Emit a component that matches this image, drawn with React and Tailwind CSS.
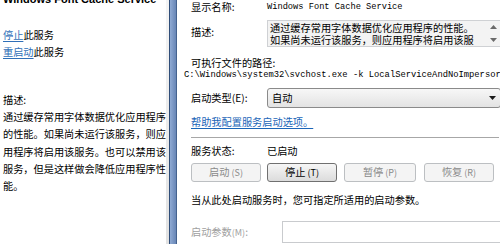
import React from 'react';

const cjk = { fontFamily: '"Noto Sans CJK SC", "Liberation Sans", sans-serif' };
const mono = { fontFamily: '"Liberation Mono", "Noto Sans CJK SC", monospace' };

function Button({ label, hot, disabled, className = '' }) {
  return (
    <div
      className={`w-[70px] h-[19px] flex items-center justify-center rounded-[3px] border text-[10.2px] leading-none ${
        disabled
          ? 'border-[#bcbfc2] bg-[#f4f4f4] text-[#8a8a8a]'
          : 'border-[#707070] bg-gradient-to-b from-[#f6f6f6] to-[#dcdcdc] text-black'
      } ${className}`}
    >
      <span>{label}</span>
      <span className="ml-[2px] text-[9px]">({hot})</span>
    </div>
  );
}

export default function App() {
  const descLines = [
    '通过缓存常用字体数据优化应用程序',
    '的性能。如果尚未运行该服务，则应',
    '用程序将启用该服务。也可以禁用该',
    '服务，但是这样做会降低应用程序性',
    '能。',
  ];

  return (
    <div className="w-[500px] h-[244px] flex overflow-hidden bg-white text-black" style={cjk}>
      {/* left details pane */}
      <div className="w-[166px] shrink-0 overflow-hidden pl-[3px] text-[10.2px]">
        <div
          className="-mt-[6px] h-[12px] text-[11px] leading-[11px] font-bold whitespace-nowrap"
          style={{ fontFamily: '"Liberation Sans", sans-serif' }}
        >
          Windows Font Cache Service
        </div>
        <div className="mt-[20px] h-[17px] leading-[17px] whitespace-nowrap">
          <span className="text-[#2f6fb8] underline underline-offset-2">停止</span>此服务
        </div>
        <div className="h-[17px] leading-[17px] whitespace-nowrap">
          <span className="text-[#2f6fb8] underline underline-offset-2">重启动</span>此服务
        </div>
        <div className="mt-[31px] h-[17px] leading-[17px]">描述:</div>
        {descLines.map((l) => (
          <div key={l} className="h-[17.3px] leading-[17px] whitespace-nowrap">
            {l}
          </div>
        ))}
      </div>

      {/* scrollbar + window frame */}
      <div className="w-[3px] shrink-0 bg-gradient-to-b from-[#f4f4f4] to-[#e2e2e2]" />
      <div className="w-[1px] shrink-0 bg-[#2f4d78]" />
      <div className="w-[6px] shrink-0 bg-gradient-to-r from-[#8faad3] to-[#6886b6]" />
      <div className="w-[1px] shrink-0 bg-[#44628e]" />

      {/* properties dialog */}
      <div className="flex-1 flex flex-col pl-[14px] pr-[5px] text-[10.2px] leading-none">
        <div className="h-[14px] flex items-center">
          <span className="w-[76px]">显示名称:</span>
          <span className="text-[8.7px] whitespace-nowrap" style={mono}>Windows Font Cache Service</span>
        </div>

        <div className="mt-[6px] h-[27px] flex">
          <span className="w-[76px] pt-[7px]">描述:</span>
          <div className="flex-1 flex border border-[#cfd1d4] bg-[#f3f3f3]">
            <div className="flex-1 pl-[2px] pt-[1px] text-[10.2px] leading-[12px] overflow-hidden whitespace-nowrap">
              <div className="h-[12px]">通过缓存常用字体数据优化应用程序的性能。</div>
              <div className="h-[12px]">如果尚未运行该服务，则应用程序将启用该服</div>
            </div>
            <div className="w-[12px] flex flex-col items-center justify-between py-[4px]">
              <svg width="7" height="4" viewBox="0 0 7 4">
                <path d="M0 4 L3.5 0 L7 4 Z" fill="#6a6a6a" />
              </svg>
              <svg width="7" height="4" viewBox="0 0 7 4">
                <path d="M0 0 L3.5 4 L7 0 Z" fill="#6a6a6a" />
              </svg>
            </div>
          </div>
        </div>

        <div className="mt-[9px] h-[14px] flex items-center">可执行文件的路径:</div>
        <div className="-ml-[7px] h-[11px] flex items-center text-[8.8px] whitespace-nowrap overflow-hidden" style={mono}>
          C:\Windows\system32\svchost.exe -k LocalServiceAndNoImpersor
        </div>

        <div className="mt-[7px] h-[20px] flex items-center">
          <span className="w-[76px]">启动类型(E):</span>
          <div className="flex-1 h-full flex items-center rounded-[3px] border border-[#8a8a8a] bg-gradient-to-b from-[#f7f7f7] to-[#e3e3e3] pl-[4px] pr-[4px]">
            <span className="flex-1">自动</span>
            <svg width="7" height="4" viewBox="0 0 7 4">
              <path d="M0 0 L3.5 4 L7 0 Z" fill="#1a1a1a" />
            </svg>
          </div>
        </div>

        <div className="mt-[7px] h-[14px] flex items-center">
          <span className="text-[#1a65b8] underline underline-offset-2">帮助我配置服务启动选项。</span>
        </div>

        <div className="mt-[8px] mr-[2px] h-[2px] border-t border-[#a7a7a7] border-b border-b-white" />

        <div className="mt-[5px] h-[14px] flex items-center">
          <span className="w-[76px]">服务状态:</span>
          <span>已启动</span>
        </div>

        <div className="mt-[5px] flex">
          <Button label="启动" hot="S" disabled />
          <Button label="停止" hot="T" className="ml-[6px]" />
          <Button label="暂停" hot="P" disabled className="ml-[7px] w-[72px]" />
          <Button label="恢复" hot="R" disabled className="ml-[8px]" />
        </div>

        <div className="mt-[11px] h-[14px] flex items-center whitespace-nowrap">
          当从此处启动服务时，您可指定所适用的启动参数。
        </div>

        <div className="mt-[14px] h-[22px] flex items-center">
          <span className="w-[91px] text-[#a0a0a0]">
            启动参数<span className="text-[9px]">(M)</span>:
          </span>
          <div className="flex-1 h-full border border-[#c9cbce] bg-white" />
        </div>
      </div>
    </div>
  );
}
